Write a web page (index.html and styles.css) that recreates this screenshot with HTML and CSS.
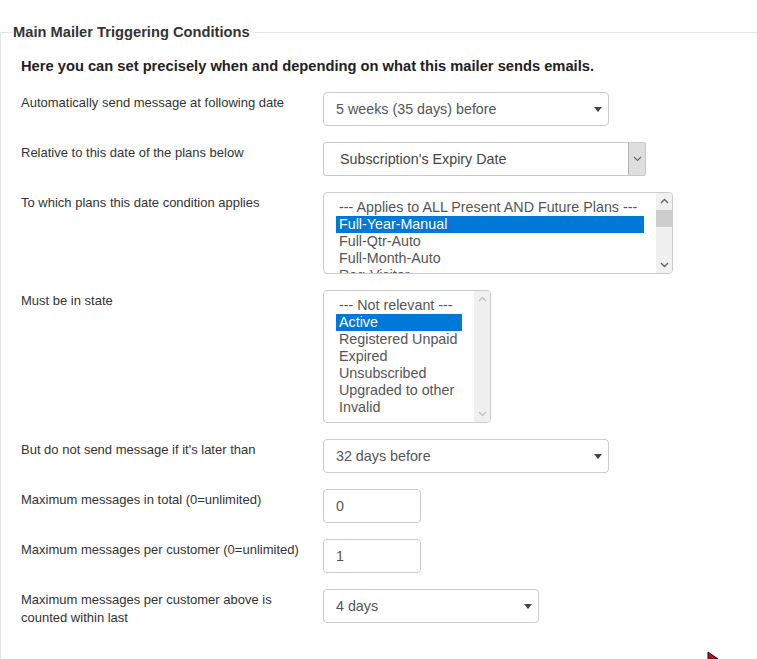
FILE: index.html
```html
<!DOCTYPE html>
<html lang="en">
<head>
<meta charset="utf-8">
<title>Main Mailer Triggering Conditions</title>
<link rel="stylesheet" href="styles.css">
</head>
<body>
<fieldset class="panel">
  <legend class="panel-title">Main Mailer Triggering Conditions</legend>
  <div class="panel-body">
    <h4 class="intro">Here you can set precisely when and depending on what this mailer sends emails.</h4>
    <div class="form-grid">
      <div class="label">Automatically send message at following date</div>
      <div class="control">
        <div class="select w-286"><span>5 weeks (35 days) before</span><span class="caret"></span></div>
      </div>

      <div class="label">Relative to this date of the plans below</div>
      <div class="control">
        <div class="native-select"><span class="native-text">Subscription's Expiry Date</span><span class="native-btn"><svg width="9" height="6" viewBox="0 0 9 6"><polyline points="1,1 4.5,4.5 8,1" fill="none" stroke="#666" stroke-width="1.1"/></svg></span></div>
      </div>

      <div class="label">To which plans this date condition applies</div>
      <div class="control">
        <div class="multi plans">
          <ul class="options">
            <li>--- Applies to ALL Present AND Future Plans ---</li>
            <li class="selected">Full-Year-Manual</li>
            <li>Full-Qtr-Auto</li>
            <li>Full-Month-Auto</li>
            <li>Reg-Visitor</li>
          </ul>
          <div class="scrollbar">
            <svg class="arrow" width="9" height="6" viewBox="0 0 9 6"><polyline points="1,5 4.5,1.5 8,5" fill="none" stroke="#606060" stroke-width="1.4"/></svg>
            <div class="track"><div class="thumb"></div></div>
            <svg class="arrow" width="9" height="6" viewBox="0 0 9 6"><polyline points="1,1 4.5,4.5 8,1" fill="none" stroke="#606060" stroke-width="1.4"/></svg>
          </div>
        </div>
      </div>

      <div class="label">Must be in state</div>
      <div class="control">
        <div class="multi states">
          <ul class="options">
            <li>--- Not relevant ---</li>
            <li class="selected">Active</li>
            <li>Registered Unpaid</li>
            <li>Expired</li>
            <li>Unsubscribed</li>
            <li>Upgraded to other</li>
            <li>Invalid</li>
          </ul>
          <div class="scrollbar disabled">
            <svg class="arrow" width="9" height="6" viewBox="0 0 9 6"><polyline points="1,5 4.5,1.5 8,5" fill="none" stroke="#c2c2c2" stroke-width="1.4"/></svg>
            <div class="track"></div>
            <svg class="arrow" width="9" height="6" viewBox="0 0 9 6"><polyline points="1,1 4.5,4.5 8,1" fill="none" stroke="#c2c2c2" stroke-width="1.4"/></svg>
          </div>
        </div>
      </div>

      <div class="label">But do not send message if it's later than</div>
      <div class="control">
        <div class="select w-286"><span>32 days before</span><span class="caret"></span></div>
      </div>

      <div class="label">Maximum messages in total (0=unlimited)</div>
      <div class="control">
        <div class="input">0</div>
      </div>

      <div class="label">Maximum messages per customer (0=unlimited)</div>
      <div class="control">
        <div class="input">1</div>
      </div>

      <div class="label">Maximum messages per customer above is counted within last</div>
      <div class="control">
        <div class="select w-216"><span>4 days</span><span class="caret"></span></div>
      </div>
    </div>
  </div>
</fieldset>
<svg class="cursor" width="12" height="10" viewBox="0 0 12 10"><path d="M1,1 L1,10 L3,8 L11,8 Z" fill="#d0021b" stroke="#111" stroke-width="1"/></svg>
</body>
</html>
```

FILE: styles.css
```css
html, body {
  margin: 0;
  padding: 0;
  background: #fff;
}

body {
  font-family: "Liberation Sans", Arial, sans-serif;
  color: #333;
  overflow: hidden;
  position: relative;
  height: 659px;
}

.panel {
  margin: 24px 0 0 0;
  padding: 16px 0 60px 12px;
  border: 0;
  border-top: 1px solid #e5e5e5;
  border-left: 1px solid #e5e5e5;
  min-width: 0;
}

.panel-title {
  padding: 0 3px 0 0;
  font-size: 14.7px;
  line-height: 16px;
  font-weight: bold;
  color: #333;
}

.panel-body {
  padding-left: 8px;
}

.intro {
  margin: 0 0 16px 0;
  font-size: 14.7px;
  line-height: 20px;
  font-weight: bold;
  color: #222;
}

.form-grid {
  display: grid;
  grid-template-columns: 302px 1fr;
  row-gap: 16px;
  align-items: start;
}

.label {
  font-size: 13px;
  line-height: 18px;
  padding-top: 2px;
  padding-right: 8px;
  color: #333;
}

.control {
  display: flex;
}

.select {
  box-sizing: border-box;
  height: 34px;
  border: 1px solid #ccc;
  border-radius: 4px;
  padding: 0 6px 0 12px;
  display: flex;
  align-items: center;
  justify-content: space-between;
  font-size: 14.3px;
  color: #555;
  background: #fff;
}

.w-286 { width: 286px; }
.w-216 { width: 216px; }

.caret {
  width: 0;
  height: 0;
  border-left: 4px solid transparent;
  border-right: 4px solid transparent;
  border-top: 5px solid #444;
  margin-top: 1px;
}

.native-select {
  box-sizing: border-box;
  width: 323px;
  height: 34px;
  border: 1px solid #c8c8c8;
  border-radius: 3px 2px 2px 3px;
  display: flex;
  align-items: stretch;
  font-size: 14.3px;
  color: #444;
  background: #fff;
}

.native-text {
  flex: 1;
  display: flex;
  align-items: center;
  padding-left: 16px;
}

.native-btn {
  width: 16px;
  background: #dedede;
  border-left: 1px solid #b5b5b5;
  display: flex;
  align-items: center;
  justify-content: center;
}

.multi {
  box-sizing: border-box;
  border: 1px solid #ccc;
  border-radius: 4px;
  display: flex;
  overflow: hidden;
  background: #fff;
}

.plans {
  width: 350px;
  height: 82px;
}

.states {
  width: 168px;
  height: 133px;
}

.options {
  list-style: none;
  margin: 0;
  padding: 6px 12px 0 12px;
  flex: 1;
  overflow: hidden;
  font-size: 14.3px;
  color: #555;
}

.options li {
  height: 17px;
  line-height: 17px;
  padding-left: 3px;
  white-space: nowrap;
}

.options li.selected {
  background: #0078d7;
  color: #fff;
}

.scrollbar {
  width: 16px;
  background: #f0f0f0;
  display: flex;
  flex-direction: column;
  align-items: center;
}

.scrollbar .arrow {
  flex: none;
  margin: 5px 0;
}

.scrollbar .track {
  flex: 1;
  width: 100%;
}

.scrollbar .thumb {
  height: 17px;
  margin-top: 1px;
  background: #cdcdcd;
}

.input {
  box-sizing: border-box;
  width: 98px;
  height: 34px;
  border: 1px solid #ccc;
  border-radius: 4px;
  padding: 0 12px;
  display: flex;
  align-items: center;
  font-size: 14.3px;
  color: #555;
}

.cursor {
  position: absolute;
  left: 707px;
  top: 651px;
}
```
